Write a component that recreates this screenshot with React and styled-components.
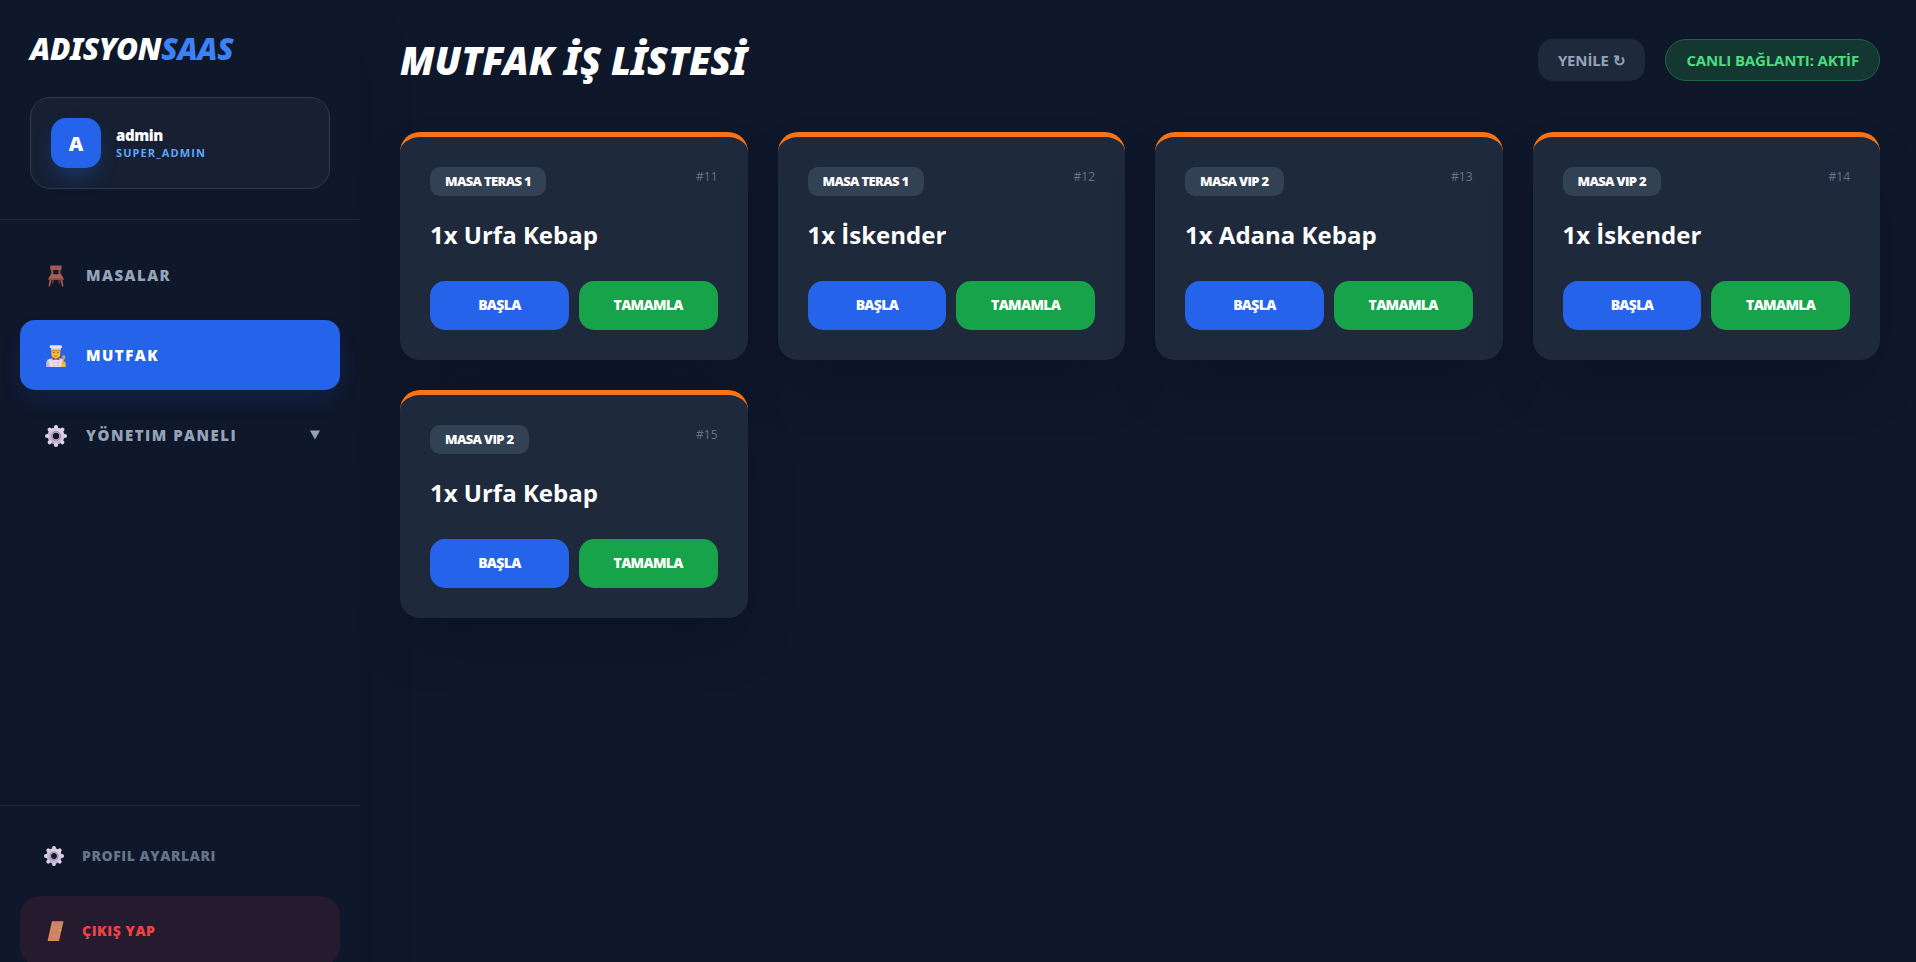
import React from 'react';
import styled, { createGlobalStyle, css } from 'styled-components';

const GlobalStyle = createGlobalStyle`
  *, *::before, *::after { box-sizing: border-box; }
  body {
    margin: 0;
    background: #0f172a;
    color: #ffffff;
    font-family: 'Open Sans', 'Noto Sans', sans-serif;
    font-size: 15px;
  }
  h1, h2, p { margin: 0; }
  button { font: inherit; border: 0; cursor: pointer; }
  a { text-decoration: none; }
`;

const Shell = styled.div`
  display: flex;
  align-items: flex-start;
  height: 100vh;
  overflow: hidden;
`;

const Sidebar = styled.aside`
  flex: 0 0 360px;
  display: flex;
  flex-direction: column;
  height: calc(100vh + 24px);
  box-shadow: 0 30px 60px -15px rgba(0, 0, 0, 0.25);
`;

const SidebarTop = styled.div`
  padding: 30px;
  border-bottom: 1px solid #1e293b;
`;

const Logo = styled.div`
  margin-bottom: 30px;
  font-family: 'Noto Sans', 'Open Sans', sans-serif;
  font-size: 30px;
  line-height: 37px;
  font-weight: 900;
  font-style: italic;
  letter-spacing: -0.01em;

  span { color: #3b82f6; }
`;

const UserCard = styled.div`
  display: flex;
  align-items: center;
  gap: 15px;
  padding: 20px;
  border: 1px solid #2c3a4e;
  border-radius: 20px;
  background: #162032;
`;

const Avatar = styled.div`
  display: grid;
  place-items: center;
  width: 50px;
  height: 50px;
  border-radius: 15px;
  background: #2563eb;
  box-shadow: 0 10px 20px -4px rgba(37, 99, 235, 0.35);
  font-size: 20px;
  font-weight: 800;
`;

const UserName = styled.p`
  font-size: 15px;
  line-height: 18px;
  font-weight: 800;
  letter-spacing: -0.025em;
`;

const UserRole = styled.p`
  font-size: 11px;
  line-height: 17px;
  font-weight: 700;
  letter-spacing: 0.1em;
  color: #60a5fa;
`;

const Nav = styled.nav`
  flex: 1;
  display: flex;
  flex-direction: column;
  gap: 10px;
  padding: 20px;
`;

const itemLayout = css`
  display: flex;
  align-items: center;
  gap: 15px;
  width: 100%;
  padding: 0 20px;
  font-weight: 800;
  text-align: left;
`;

const navItem = css`
  ${itemLayout}
  height: 70px;
  border-radius: 15px;
  font-size: 15px;
  letter-spacing: 0.1em;
  color: ${(p) => (p.$active ? '#ffffff' : '#94a3b8')};
  background: ${(p) => (p.$active ? '#2563eb' : 'transparent')};
  box-shadow: ${(p) => (p.$active ? '0 12px 24px -4px rgba(37, 99, 235, 0.15)' : 'none')};
`;

const NavLink = styled.a`${navItem}`;
const NavButton = styled.button`${navItem}`;

const IconSlot = styled.span`
  display: grid;
  place-items: center;
  width: ${(p) => (p.$small ? 27 : 31)}px;
  padding-top: 2px;
`;

const Label = styled.span`
  flex: 1;
`;

const SidebarBottom = styled.div`
  display: flex;
  flex-direction: column;
  gap: 10px;
  padding: 20px;
  border-top: 1px solid #1e293b;
`;

const footerItem = css`
  ${itemLayout}
  padding-bottom: 2px;
  font-size: 14px;
  letter-spacing: 0.04em;
`;

const ProfileLink = styled.a`
  ${footerItem}
  height: 60px;
  color: #64748b;
`;

const LogoutButton = styled.button`
  ${footerItem}
  height: 70px;
  border-radius: 20px;
  color: #ef4444;
  background: #261a2e;
`;

const Main = styled.main`
  flex: 1;
  min-width: 0;
  height: 100%;
  padding: 39px 36px 40px 40px;
`;

const Header = styled.header`
  display: flex;
  justify-content: space-between;
  align-items: flex-start;
  margin-bottom: 48px;
`;

const Title = styled.h1`
  padding-bottom: 2px;
  font-family: 'Noto Sans', 'Open Sans', sans-serif;
  font-size: 38px;
  line-height: 43px;
  font-weight: 900;
  font-style: italic;
`;

const HeaderActions = styled.div`
  display: flex;
  gap: 20px;
`;

const RefreshButton = styled.button`
  height: 42px;
  padding: 0 20px;
  border-radius: 15px;
  background: #1e293b;
  color: #94a3b8;
  font-size: 15px;
  font-weight: 700;
  letter-spacing: -0.01em;
`;

const StatusPill = styled.div`
  display: flex;
  align-items: center;
  height: 42px;
  padding: 0 20px;
  border: 1px solid #1b6541;
  border-radius: 21px;
  background: #143732;
  color: #4ade80;
  font-size: 15px;
  font-weight: 700;
  letter-spacing: -0.01em;
`;

const OrderGrid = styled.div`
  display: grid;
  grid-template-columns: repeat(4, 1fr);
  gap: 30px;
`;

const OrderCard = styled.article`
  padding: 30px;
  border-top: 5px solid #f97316;
  border-radius: 20px;
  background: #1e293b;
  box-shadow: 0 30px 60px -15px rgba(0, 0, 0, 0.25);
`;

const CardTop = styled.div`
  display: flex;
  justify-content: space-between;
  align-items: flex-start;
`;

const TableBadge = styled.span`
  padding: 0 15px;
  border-radius: 10px;
  background: #334155;
  font-size: 13px;
  line-height: 29px;
  font-weight: 800;
  letter-spacing: -0.05em;
`;

const OrderNumber = styled.span`
  font-size: 12px;
  line-height: 19px;
  color: #64748b;
`;

const OrderName = styled.h2`
  margin: 21px 0 28px;
  font-size: 24px;
  line-height: 36px;
  font-weight: 700;
`;

const CardActions = styled.div`
  display: grid;
  grid-template-columns: 1fr 1fr;
  gap: 10px;
`;

const ActionButton = styled.button`
  height: 49px;
  padding: 0 0 2px;
  border-radius: 15px;
  background: ${(p) => (p.$tone === 'green' ? '#16a34a' : '#2563eb')};
  color: #ffffff;
  font-size: 14px;
  font-weight: 800;
  letter-spacing: -0.05em;
`;

const ChairIcon = () => (
  <svg width="16" height="22" viewBox="0 0 16 22" aria-hidden="true">
    <path d="M4 14h2l-.6 4.5H3.6zM10 14h2l.4 4.5h-1.8z" fill="#6b2f45" />
    <path d="M1.6 14h2.2L2 21.6H.5zM12.2 14h2.2l1.1 7.6H14z" fill="#9a5650" />
    <path d="M3.2 4.6h2.2V10H3.2zM10.4 4.6h2.2V10h-2.2z" fill="#96504b" />
    <rect x="2.2" y=".5" width="11.4" height="4.4" rx=".9" fill="#a05a52" />
    <path d="M2.8 9.3h10.4l2.3 4.2v1.2H.5v-1.2z" fill="#a9614f" />
    <path d="M.5 13.4h15v1.4H.5z" fill="#8b4745" />
  </svg>
);

const ChefIcon = () => (
  <svg width="20" height="22" viewBox="0 0 20 22" aria-hidden="true">
    <path d="M.5 22v-4.2c0-2.6 2-4.2 4.6-4.4h9.2c2.600 0 4.200 1.600 4.200 4.200V22z" fill="#e6dcef" />
    <path d="M.5 22v-4.200c0-1.300.5-2.400 1.300-3.200L4.300 22z" fill="#c9b8dd" />
    <path d="M16 17.500h3.600V22H15z" fill="#fdc21f" />
    <path d="M16.500 10.700c1.200-.8 2.900-.1 2.900 1.500 0 1.300-.7 1.900-1.300 2.300l-.5 4h-1.200l.3-4.200c-.9-.9-1.100-2.700-.2-3.600z" fill="#e0935b" />
    <path d="M5.400 4h8.800v5.200c0 2.600-1.900 4.200-4.400 4.200s-4.400-1.600-4.400-4.200z" fill="#fdc326" />
    <path d="M5.200 4h9.200v1.700l-1.200.8H6.400L5.200 5.700z" fill="#d99a20" />
    <circle cx="7.900" cy="7.500" r=".7" fill="#5b3a3f" />
    <circle cx="11.800" cy="7.500" r=".7" fill="#5b3a3f" />
    <path d="M8.400 10.400h2.900l-.6 1H9z" fill="#d8442f" />
    <path d="M3.600 1.600C3.600.7 4.500.2 5.400.2h8.900c1 0 1.800.6 1.800 1.500 0 .8-.6 1.300-1.300 1.500v1.400H5V3.200c-.8-.2-1.400-.8-1.400-1.600z" fill="#e9e0f1" />
    <path d="M5 3.700h9.800v1H5z" fill="#c8b8d8" />
    <path d="M6.600 12.300l3.200 1.400 3.200-1.400.2 3-3.400-.7-3.400.7z" fill="#d92c50" />
    <circle cx="8" cy="18" r=".5" fill="#a18bb5" />
    <circle cx="12" cy="18" r=".5" fill="#a18bb5" />
    <circle cx="8" cy="20.500" r=".5" fill="#a18bb5" />
    <circle cx="12" cy="20.500" r=".5" fill="#a18bb5" />
  </svg>
);

const GEAR_TEETH = [0, 45, 90, 135, 180, 225, 270, 315];

const GearIcon = ({ size }) => (
  <svg width={size} height={size} viewBox="0 0 22 22" aria-hidden="true">
    <defs>
      <linearGradient id={`gear${size}`} gradientUnits="userSpaceOnUse" x1="16" y1="1" x2="6" y2="21">
        <stop offset="0" stopColor="#e3dbe8" />
        <stop offset="1" stopColor="#b9a3d3" />
      </linearGradient>
    </defs>
    <g fill={`url(#gear${size})`}>
      <path fillRule="evenodd" d="M11 2.500a8.500 8.500 0 100 17 8.500 8.500 0 000-17zm0 5.300a3.200 3.200 0 110 6.400 3.200 3.200 0 010-6.400z" />
      {GEAR_TEETH.map((a) => (
        <circle key={a} cx="11" cy="2.100" r="2.100" transform={`rotate(${a} 11 11)`} />
      ))}
    </g>
    <circle cx="11" cy="11" r="4.300" fill="none" stroke="#a092a8" strokeWidth="1.500" />
  </svg>
);

const DoorIcon = () => (
  <svg width="21" height="20" viewBox="-4 0 21 20" aria-hidden="true">
    <path d="M5 .2h11.500L12 19.900H.6z" fill="#e08c4a" />
    <path d="M6 1.200h9.200L11.200 19H2z" fill="#c98568" />
    <path d="M5 6.500h9M4.600 9h8.800M3.400 14h9" stroke="#dc8a50" strokeWidth=".9" />
    <circle cx="12.900" cy="9.200" r=".8" fill="#ffc02e" />
  </svg>
);

const CaretIcon = () => (
  <svg width="10" height="10" viewBox="0 0 10 10" aria-hidden="true">
    <path d="M0 .5h10L5 9.500z" fill="currentColor" />
  </svg>
);

const ORDERS = [
  { id: 11, table: 'MASA TERAS 1', name: '1x Urfa Kebap' },
  { id: 12, table: 'MASA TERAS 1', name: '1x İskender' },
  { id: 13, table: 'MASA VIP 2', name: '1x Adana Kebap' },
  { id: 14, table: 'MASA VIP 2', name: '1x İskender' },
  { id: 15, table: 'MASA VIP 2', name: '1x Urfa Kebap' },
];

const Order = ({ id, table, name }) => (
  <OrderCard>
    <CardTop>
      <TableBadge>{table}</TableBadge>
      <OrderNumber>#{id}</OrderNumber>
    </CardTop>
    <OrderName>{name}</OrderName>
    <CardActions>
      <ActionButton type="button">BAŞLA</ActionButton>
      <ActionButton type="button" $tone="green">TAMAMLA</ActionButton>
    </CardActions>
  </OrderCard>
);

export default function App() {
  return (
    <>
      <GlobalStyle />
      <Shell lang="tr">
        <Sidebar>
          <SidebarTop>
            <Logo>ADISYON<span>SAAS</span></Logo>
            <UserCard>
              <Avatar>A</Avatar>
              <div>
                <UserName>admin</UserName>
                <UserRole>SUPER_ADMIN</UserRole>
              </div>
            </UserCard>
          </SidebarTop>
          <Nav>
            <NavLink href="#masalar">
              <IconSlot><ChairIcon /></IconSlot>
              <Label>MASALAR</Label>
            </NavLink>
            <NavLink href="#mutfak" $active aria-current="page">
              <IconSlot><ChefIcon /></IconSlot>
              <Label>MUTFAK</Label>
            </NavLink>
            <NavButton type="button" aria-expanded="false">
              <IconSlot><GearIcon size={22} /></IconSlot>
              <Label>YÖNETIM PANELI</Label>
              <CaretIcon />
            </NavButton>
          </Nav>
          <SidebarBottom>
            <ProfileLink href="#profil">
              <IconSlot $small><GearIcon size={20} /></IconSlot>
              <Label>PROFIL AYARLARI</Label>
            </ProfileLink>
            <LogoutButton type="button">
              <IconSlot $small><DoorIcon /></IconSlot>
              <Label>ÇIKIŞ YAP</Label>
            </LogoutButton>
          </SidebarBottom>
        </Sidebar>
        <Main>
          <Header>
            <Title>MUTFAK İŞ LİSTESİ</Title>
            <HeaderActions>
              <RefreshButton type="button">YENİLE ↻</RefreshButton>
              <StatusPill role="status">CANLI BAĞLANTI: AKTİF</StatusPill>
            </HeaderActions>
          </Header>
          <OrderGrid>
            {ORDERS.map((o) => <Order key={o.id} {...o} />)}
          </OrderGrid>
        </Main>
      </Shell>
    </>
  );
}
